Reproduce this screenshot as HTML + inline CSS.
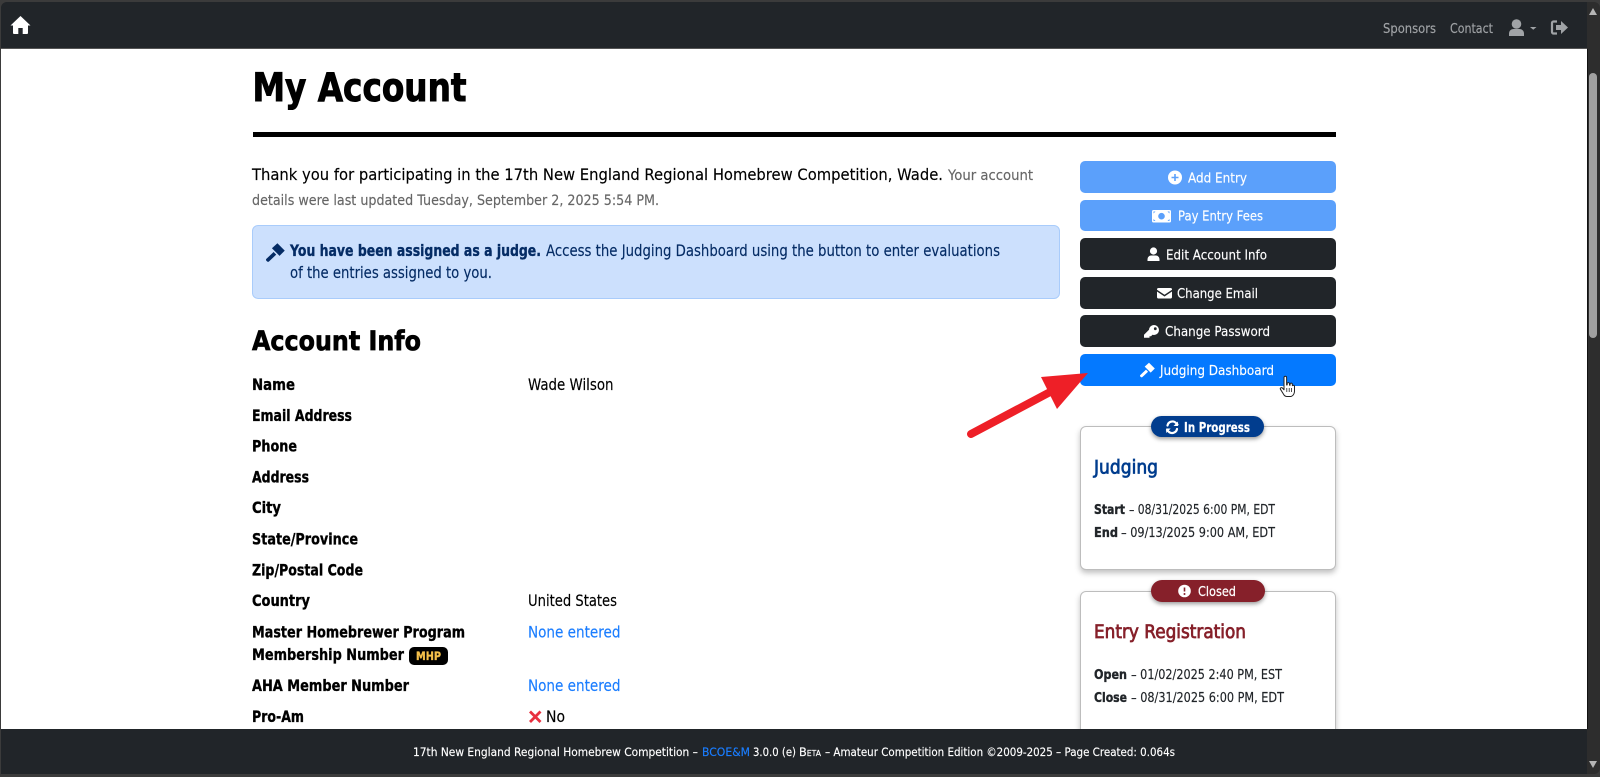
<!DOCTYPE html>
<html lang="en"><head><meta charset="utf-8"><title>My Account</title>
<style>
html,body{margin:0;padding:0;width:1600px;height:777px;overflow:hidden;background:#3b3b3b}
.a{position:absolute}
#view{left:1px;top:2px;width:1599px;height:772px;background:#2d2d2d;border-radius:6px;overflow:hidden}
#nav{left:0;top:0;width:1586px;height:46px;background:#212529;border-bottom:1px solid #555}
#main{left:0;top:47px;width:1586px;height:680px;background:#fff;border-right:1px solid #111}
#foot{left:0;top:727px;width:1586px;height:45px;background:#212529}
#thumb{left:1589px;top:73px;width:8px;height:265px;background:#a0a0a0;border-radius:4px}
.rule{left:253px;top:132px;width:1083px;height:4.5px;background:#000}
.alert{left:252px;top:225px;width:806px;height:72px;background:#cce0fd;border:1px solid #a9ccfb;border-radius:6px}
.btn{left:1080px;width:256px;height:31.5px;border-radius:5px}
.lb{background:#5ba0fb}.dk{background:#212529}.pr{background:#0479ff}
.card{left:1080px;width:254px;background:#fff;border:1px solid #bdbdbd;border-radius:6px;box-shadow:0 3px 6px rgba(0,0,0,.25)}
.badge{border-radius:11px;box-shadow:0 2px 4px rgba(0,0,0,.4)}
.mhp{left:409px;top:647px;width:39px;height:18px;background:#000;border-radius:5px}
svg{position:absolute;left:0;top:0}
text{font-family:"DejaVu Sans","Liberation Sans",sans-serif;font-size:15.7px;fill:#000;stroke:#000;stroke-width:.15px}
.b{font-weight:700;stroke-width:.35px}
.w{fill:#fff;stroke:#fff;font-size:13.7px}
.n{fill:#a0a3a6;stroke:#a0a3a6;font-size:13.7px}
.g{fill:#666;stroke:#666;font-size:14.4px}
.al{fill:#052c65;stroke:#052c65}
.l{fill:#1a7dff;stroke:#1a7dff}
.c{fill:#212529;stroke:#212529;font-size:13px}
.f{fill:#fff;stroke:#fff;font-size:11.8px}
</style></head><body>
<div class="a" id="view">
  <div class="a" id="nav"></div>
  <div class="a" id="main"></div>
</div>
<div class="a rule"></div>
<div class="a alert"></div>
<div class="a btn lb" style="top:161px;height:32px"></div>
<div class="a btn lb" style="top:199.5px"></div>
<div class="a btn dk" style="top:238px"></div>
<div class="a btn dk" style="top:277px"></div>
<div class="a btn dk" style="top:315px"></div>
<div class="a btn pr" style="top:354px"></div>
<div class="a card" style="top:426px;height:142px"></div>
<div class="a card" style="top:590.5px;height:170px"></div>
<div class="a badge" style="left:1151px;top:416px;width:113px;height:21px;background:#013d8e"></div>
<div class="a badge" style="left:1151px;top:580px;width:114px;height:22px;background:#86202a"></div>
<div class="a mhp"></div>
<div class="a" id="foot" style="left:1px;top:729px"></div>
<div class="a" id="thumb"></div>

<svg width="1600" height="777" viewBox="0 0 1600 777" xmlns="http://www.w3.org/2000/svg">
<defs>
<symbol id="gavel" viewBox="0 0 16 16"><path d="M5 4.400 9.600.2 15.800 6.400 11.400 10.800z"/><path d="M6.400 7.600 8.600 9.800 2.600 15.500a1.200 1.200 0 0 1-1.700 0l-.5-.5a1.200 1.200 0 0 1 0-1.700z"/></symbol>
</defs>

<!-- nav -->
<path fill="#fff" d="M20.500 16 30.500 25.500H28V33a1 1 0 0 1-1 1h-4.300v-6h-4.400v6H14a1 1 0 0 1-1-1v-7.500H10.500z"/>
<text class="n" x="1383" y="33" textLength="53" lengthAdjust="spacingAndGlyphs">Sponsors</text>
<text class="n" x="1450" y="33" textLength="43" lengthAdjust="spacingAndGlyphs">Contact</text>
<circle cx="1516.500" cy="24" r="4.800" fill="#a0a3a6"/>
<path fill="#a0a3a6" d="M1509 36v-2.500c0-3 2.500-4.500 4.500-4.500h6c2 0 4.500 1.500 4.500 4.500V36z"/>
<path fill="#a0a3a6" d="M1530 27h6.500l-3.250 2.800z"/>
<path fill="none" stroke="#a0a3a6" stroke-width="2.200" d="M1557 21.500h-3.500a1.500 1.500 0 0 0-1.500 1.500v9a1.500 1.500 0 0 0 1.500 1.500h3.500"/>
<path fill="#a0a3a6" d="M1561 21 1568 27.500 1561 34v-4h-5v-5h5z"/>

<!-- scrollbar arrows -->
<path fill="#b5b5b5" d="M1593 8 1597 15H1589z"/>
<path fill="#b5b5b5" d="M1593 768 1597 761H1589z"/>

<!-- heading -->
<text class="b" style="font-size:39px;stroke-width:1px" x="252.500" y="101" textLength="214" lengthAdjust="spacingAndGlyphs">My Account</text>

<!-- intro -->
<text x="252" y="180" textLength="691" lengthAdjust="spacingAndGlyphs">Thank you for participating in the 17th New England Regional Homebrew Competition, Wade.</text>
<text class="g" x="948" y="180" textLength="85" lengthAdjust="spacingAndGlyphs">Your account</text>
<text class="g" x="252" y="205" textLength="407" lengthAdjust="spacingAndGlyphs">details were last updated Tuesday, September 2, 2025 5:54 PM.</text>

<!-- alert -->
<use href="#gavel" x="266" y="243" width="19" height="19" fill="#052c65"/>
<text class="al b" x="290" y="256" textLength="251" lengthAdjust="spacingAndGlyphs">You have been assigned as a judge.</text>
<text class="al" x="546" y="256" textLength="454" lengthAdjust="spacingAndGlyphs">Access the Judging Dashboard using the button to enter evaluations</text>
<text class="al" x="290" y="278" textLength="202" lengthAdjust="spacingAndGlyphs">of the entries assigned to you.</text>

<!-- account info -->
<text class="b" style="font-size:26.500px;stroke-width:.7px" x="252" y="350" textLength="169" lengthAdjust="spacingAndGlyphs">Account Info</text>
<text class="b" x="252" y="390" textLength="43" lengthAdjust="spacingAndGlyphs">Name</text>
<text x="528" y="390" textLength="85.500" lengthAdjust="spacingAndGlyphs">Wade Wilson</text>
<text class="b" x="252" y="421" textLength="100" lengthAdjust="spacingAndGlyphs">Email Address</text>
<text class="b" x="252" y="451.500" textLength="45" lengthAdjust="spacingAndGlyphs">Phone</text>
<text class="b" x="252" y="482.500" textLength="57" lengthAdjust="spacingAndGlyphs">Address</text>
<text class="b" x="252" y="513" textLength="29" lengthAdjust="spacingAndGlyphs">City</text>
<text class="b" x="252" y="544.500" textLength="106" lengthAdjust="spacingAndGlyphs">State/Province</text>
<text class="b" x="252" y="575.500" textLength="111" lengthAdjust="spacingAndGlyphs">Zip/Postal Code</text>
<text class="b" x="252" y="606" textLength="58" lengthAdjust="spacingAndGlyphs">Country</text>
<text x="528" y="606" textLength="89" lengthAdjust="spacingAndGlyphs">United States</text>
<text class="b" x="252" y="637.500" textLength="213" lengthAdjust="spacingAndGlyphs">Master Homebrewer Program</text>
<text class="l" x="528" y="637.500" textLength="92.500" lengthAdjust="spacingAndGlyphs">None entered</text>
<text class="b" x="252" y="660" textLength="152" lengthAdjust="spacingAndGlyphs">Membership Number</text>
<text class="b" style="fill:#f5c04a;stroke:#f5c04a;font-size:11.500px" x="416" y="660" textLength="25" lengthAdjust="spacingAndGlyphs">MHP</text>
<text class="b" x="252" y="691" textLength="157" lengthAdjust="spacingAndGlyphs">AHA Member Number</text>
<text class="l" x="528" y="691" textLength="92.500" lengthAdjust="spacingAndGlyphs">None entered</text>
<text class="b" x="252" y="722" textLength="52" lengthAdjust="spacingAndGlyphs">Pro-Am</text>
<path stroke="#e8303f" stroke-width="2.800" d="M530 711.500 540.500 722M540.500 711.500 530 722"/>
<text x="546" y="722" textLength="19" lengthAdjust="spacingAndGlyphs">No</text>

<!-- buttons -->
<circle cx="1175" cy="177.500" r="7" fill="#fff"/>
<path stroke="#5ba0fb" stroke-width="1.600" d="M1175 174v7M1171.500 177.500h7"/>
<text class="w" x="1188" y="182.500" textLength="59" lengthAdjust="spacingAndGlyphs">Add Entry</text>
<rect x="1152" y="210" width="19" height="12.500" rx="1.500" fill="#fff"/>
<circle cx="1161.500" cy="216.200" r="3.300" fill="#5ba0fb"/>
<path fill="#5ba0fb" d="M1153.500 211.500h2l-2 2zM1169.500 211.500h-2l2 2zM1153.500 221h2l-2-2zM1169.500 221h-2l2-2z"/>
<text class="w" x="1178" y="220.500" textLength="85" lengthAdjust="spacingAndGlyphs">Pay Entry Fees</text>
<circle cx="1153.500" cy="251" r="3.600" fill="#fff"/>
<path fill="#fff" d="M1147.500 261v-1.500c0-2.500 1.800-4 3.500-4h5c1.700 0 3.500 1.500 3.500 4v1.500z"/>
<text class="w" x="1166" y="259.500" textLength="101" lengthAdjust="spacingAndGlyphs">Edit Account Info</text>
<path fill="#fff" d="M1158.500 288h12a1.500 1.500 0 0 1 1.500 1.500v.3l-7.500 5-7.500-5v-.3a1.500 1.500 0 0 1 1.500-1.500z"/>
<path fill="#fff" d="M1157 291.500 1164.500 296.500 1172 291.500V297a1.500 1.500 0 0 1-1.500 1.500h-12a1.500 1.500 0 0 1-1.500-1.500z"/>
<text class="w" x="1177" y="298" textLength="81" lengthAdjust="spacingAndGlyphs">Change Email</text>
<path fill="#fff" fill-rule="evenodd" d="M1154 325a5 5 0 0 1 0 10 5 5 0 0 1-1.500-.2l-1.500 1.500h-1.500v1.500h-5.500v-3l5-5a5 5 0 0 1 5-4.800zm1.300 2.300a1.400 1.400 0 1 0 0 2.800 1.400 1.400 0 0 0 0-2.800z"/>
<text class="w" x="1165" y="336" textLength="105" lengthAdjust="spacingAndGlyphs">Change Password</text>
<use href="#gavel" x="1140" y="362.500" width="15" height="15" fill="#fff"/>
<text class="w" x="1160" y="375" textLength="114" lengthAdjust="spacingAndGlyphs">Judging Dashboard</text>

<!-- arrow -->
<path fill="none" stroke="#ee1f27" stroke-width="8" stroke-linecap="round" d="M971 434 1052 391"/>
<path fill="#ee1f27" d="M1088 373 1041 377 1057 409z"/>

<!-- cursor -->
<path fill="#fff" stroke="#222" stroke-width="1" stroke-linejoin="round" d="M1284 379v-1.500a1.300 1.300 0 0 1 2.600 0V385l.6-.1v-1.400a1.200 1.200 0 0 1 2.300 0v1.600l.6.1v-1a1.100 1.100 0 0 1 2.200 0v1.200l.5.2a1 1 0 0 1 1.700.6v5c0 2.500-1.500 4.800-3.500 5.300h-4c-2 0-2.800-.9-3.600-2.500l-3-4.800c-.6-1.200 1.100-2.100 2-1.200l1.600 1.800z"/>
<path stroke="#222" stroke-width=".8" d="M1286.800 388v4M1289.200 388v4M1291.600 388v4"/>

<!-- card 1 -->
<g fill="none" stroke="#fff" stroke-width="2.200" stroke-linecap="round"><path d="M1167.500 425.500a5 5 0 0 1 8.500-2.500l1.500 1.500M1177 429a5 5 0 0 1-8.500 2.500L1167 430"/></g>
<path fill="#fff" d="M1178 421.500V426H1173.500zM1166.200 433V428.500H1170.700z"/>
<text class="w" style="font-weight:600;stroke-width:.2px" x="1184" y="432" textLength="66" lengthAdjust="spacingAndGlyphs">In Progress</text>
<text style="fill:#013d8e;stroke:#013d8e;font-size:18.200px;stroke-width:.75px" x="1094" y="473.500" textLength="64" lengthAdjust="spacingAndGlyphs">Judging</text>
<text class="c b" x="1094" y="514" textLength="31" lengthAdjust="spacingAndGlyphs">Start</text>
<text class="c" x="1129" y="514" textLength="146" lengthAdjust="spacingAndGlyphs">– 08/31/2025 6:00 PM, EDT</text>
<text class="c b" x="1094" y="537" textLength="24" lengthAdjust="spacingAndGlyphs">End</text>
<text class="c" x="1121" y="537" textLength="154" lengthAdjust="spacingAndGlyphs">– 09/13/2025 9:00 AM, EDT</text>

<!-- card 2 -->
<circle cx="1184.500" cy="591" r="6.300" fill="#fff"/>
<path stroke="#86202a" stroke-width="1.600" d="M1184.500 587.500v4"/><circle cx="1184.500" cy="594" r="1" fill="#86202a"/>
<text class="w" style="font-size:13.700px;stroke-width:.25px" x="1198" y="596" textLength="38" lengthAdjust="spacingAndGlyphs">Closed</text>
<text style="fill:#86202a;stroke:#86202a;font-size:18.200px;stroke-width:.75px" x="1094" y="638" textLength="152" lengthAdjust="spacingAndGlyphs">Entry Registration</text>
<text class="c b" x="1094" y="679" textLength="33" lengthAdjust="spacingAndGlyphs">Open</text>
<text class="c" x="1131" y="679" textLength="151" lengthAdjust="spacingAndGlyphs">– 01/02/2025 2:40 PM, EST</text>
<text class="c b" x="1094" y="702" textLength="33" lengthAdjust="spacingAndGlyphs">Close</text>
<text class="c" x="1131" y="702" textLength="153" lengthAdjust="spacingAndGlyphs">– 08/31/2025 6:00 PM, EDT</text>

<!-- footer -->
<text class="f" x="413" y="756" textLength="285" lengthAdjust="spacingAndGlyphs">17th New England Regional Homebrew Competition –</text>
<text class="f" style="fill:#1a7dff;stroke:#1a7dff" x="702" y="756" textLength="48" lengthAdjust="spacingAndGlyphs">BCOE&amp;M</text>
<text class="f" x="753" y="756" textLength="43" lengthAdjust="spacingAndGlyphs">3.0.0 (e)</text>
<text class="f" x="799" y="756" textLength="22" lengthAdjust="spacingAndGlyphs">B<tspan style="font-size:8px">ETA</tspan></text>
<text class="f" x="825" y="756" textLength="350" lengthAdjust="spacingAndGlyphs">– Amateur Competition Edition ©2009-2025 – Page Created: 0.064s</text>
</svg>
</body></html>
